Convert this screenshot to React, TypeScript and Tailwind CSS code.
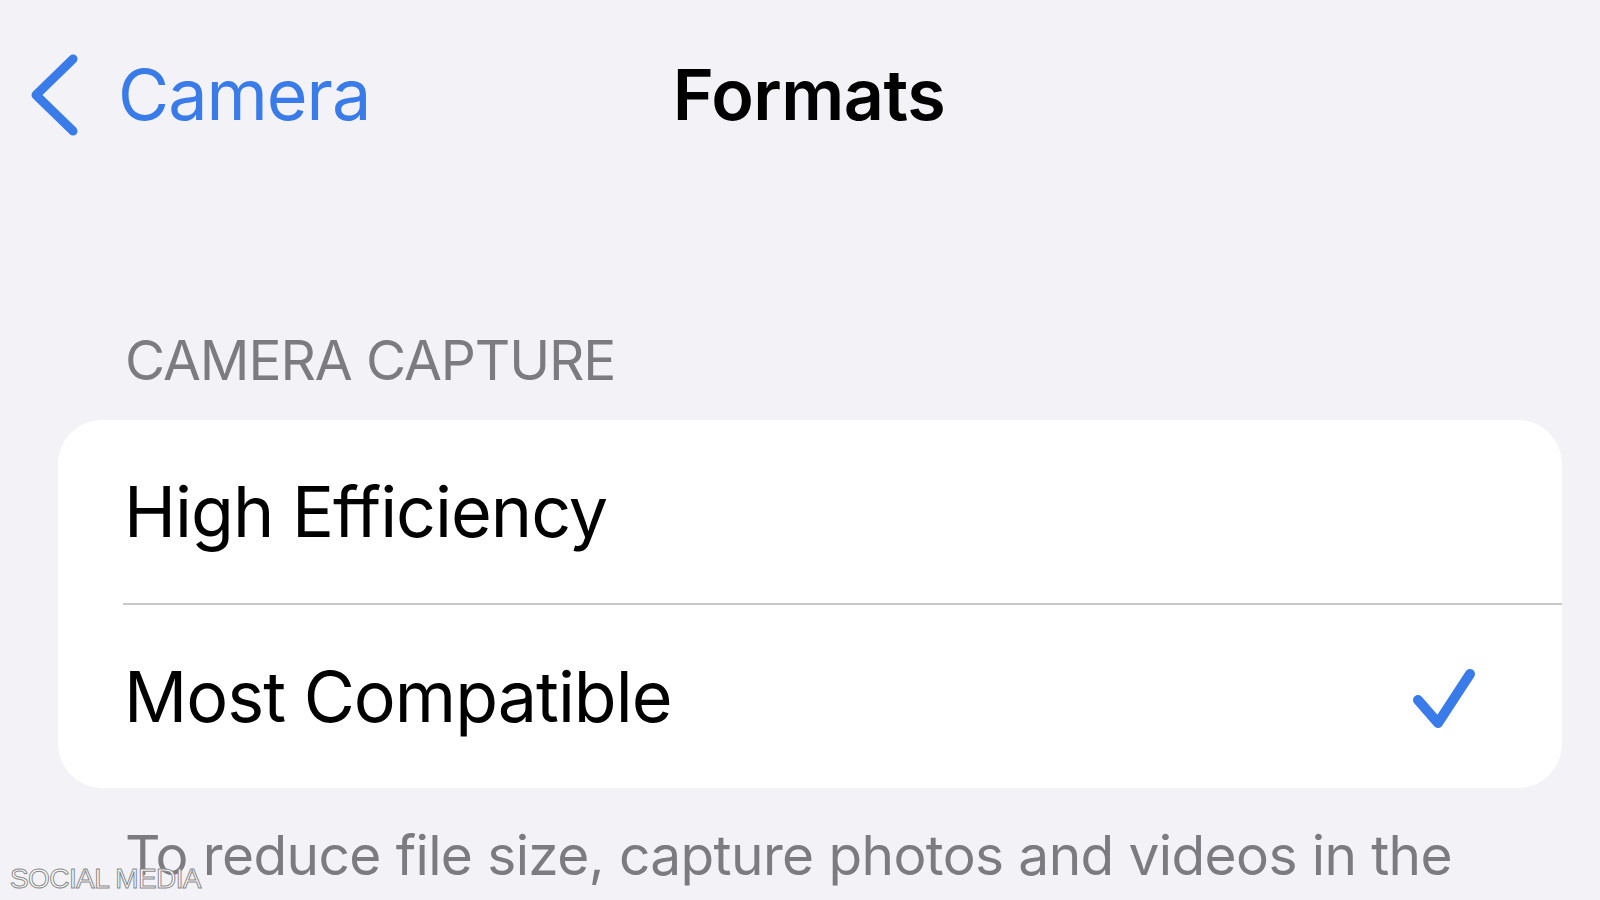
import React from "react";

function Chevron() {
  return (
    <svg width="52" height="82" viewBox="0 0 52 82" className="shrink-0">
      <path d="M44 5 L7 41 L44 77" fill="none" stroke="#3a7bea" strokeWidth="9" strokeLinecap="round" strokeLinejoin="round" />
    </svg>
  );
}

function Check() {
  return (
    <svg width="70" height="70" viewBox="0 0 70 70" className="shrink-0 translate-y-[3px]">
      <path d="M10 35 L30 58 L62 9" fill="none" stroke="#3a7bea" strokeWidth="10" strokeLinecap="round" strokeLinejoin="round" />
    </svg>
  );
}

export default function App() {
  return (
    <div className="relative w-[1600px] h-[900px] overflow-hidden bg-[#f2f2f7] font-['Inter','Noto_Sans',sans-serif]">
      <header className="h-[189px] grid grid-cols-[1fr_auto_1fr] items-center">
        <div className="flex items-center pl-[29px] gap-[37px]">
          <Chevron />
          <span className="text-[70px] leading-[70px] text-[#3a7bea] tracking-[-1px]">Camera</span>
        </div>
        <div className="pl-[18px] text-[70px] leading-[70px] font-semibold text-black tracking-[-0.5px]">Formats</div>
        <div />
      </header>

      <div className="mt-[143px] pl-[125px] text-[55px] leading-[56px] uppercase text-[#7b7b80] tracking-[-1.1px]">
        Camera Capture
      </div>

      <div className="mt-[32px] ml-[58px] mr-[38px] rounded-[44px] bg-white overflow-hidden">
        <div className="h-[183px] flex items-center pl-[66px] pr-[84px]">
          <span className="text-[70px] leading-[70px] text-black tracking-[-1px]">High Efficiency</span>
        </div>
        <div className="ml-[65px] h-[2px] bg-[#c8c8cc]" />
        <div className="h-[183px] flex items-center justify-between pl-[66px] pr-[84px]">
          <span className="text-[70px] leading-[70px] text-black tracking-[-1px]">Most Compatible</span>
          <Check />
        </div>
      </div>

      <p className="mt-[33px] pl-[125px] pr-[100px] text-[55px] leading-[68px] text-[#7b7b80] tracking-[-0.6px]">
        To reduce file size, capture photos and videos in the high efficiency HEIF/HEVC format. Most Compatible will always use JPEG/H.264.
      </p>

      <div className="absolute left-[10px] top-[865px] text-[28px] leading-[28px] text-white tracking-[-0.6px] font-['Liberation_Sans',sans-serif] [-webkit-text-stroke:1px_#8a8a8a]">
        SOCIAL MEDIA
      </div>
    </div>
  );
}
